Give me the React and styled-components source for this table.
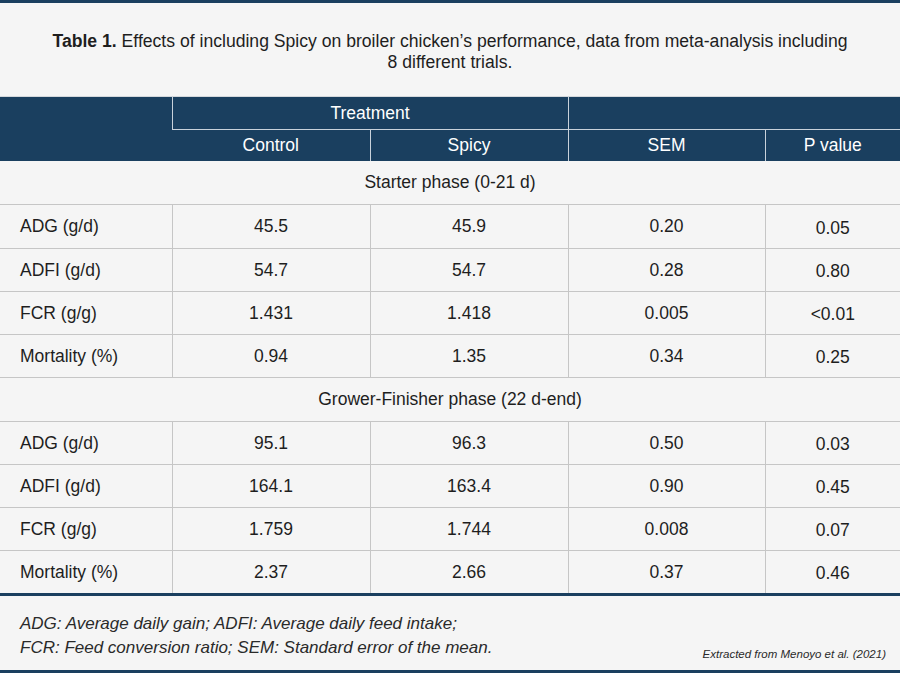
import React from 'react';
import styled, { createGlobalStyle } from 'styled-components';

const navy = '#1a3f5f';

const GlobalStyle = createGlobalStyle`
  html, body {
    margin: 0;
    padding: 0;
    background: #f5f5f5;
  }
  body {
    font-family: "Liberation Sans", Arial, sans-serif;
    color: #222;
  }
`;

const Page = styled.div`
  width: 900px;
  height: 673px;
  box-sizing: border-box;
  border-top: 3px solid ${navy};
  border-bottom: 3px solid ${navy};
  background: #f5f5f5;
  display: flex;
  flex-direction: column;
  overflow: hidden;
`;

const Caption = styled.div`
  flex-shrink: 0;
  height: 93px;
  display: flex;
  align-items: center;
  justify-content: center;
  text-align: center;
  padding: 4px 46px 0;
  font-size: 17.6px;
  line-height: 21px;
  color: #1e1e1e;
  box-sizing: border-box;

  b {
    font-weight: 700;
  }
`;

const Table = styled.table`
  flex-shrink: 0;
  width: 900px;
  border-collapse: collapse;
  table-layout: fixed;
  border-top: 1px solid #d4d8dc;
`;

const HeadCell = styled.th`
  background: ${navy};
  color: #fff;
  font-weight: 400;
  font-size: 17.5px;
  height: ${p => p.$h || 31}px;
  padding: 0;
  text-align: center;
  border-left: 1px solid #c9d2db;
  border-bottom: ${p => (p.$line ? '1px solid #c9d2db' : 'none')};

  &:first-child {
    border-left: none;
  }
`;

const PhaseCell = styled.td`
  height: 43px;
  padding: 0;
  text-align: center;
  font-size: 17.5px;
  color: #1e1e1e;
  border-bottom: 1px solid #c6c6c6;
`;

// row height = height + padding-top; the P value column sits 3px lower
const Cell = styled.td`
  height: ${p => (p.$tall ? 43 : 42) - (p.$low ? 3 : 0)}px;
  padding: ${p => (p.$low ? 3 : 0)}px 0 0 ${p => (p.$label ? 20 : 0)}px;
  font-size: 17.5px;
  color: #1e1e1e;
  text-align: ${p => (p.$label ? 'left' : 'center')};
  border-bottom: ${p => (p.$end ? `3px solid ${navy}` : '1px solid #c6c6c6')};
  border-left: 1px solid #c6c6c6;

  &:first-child {
    border-left: none;
  }
`;

const Footer = styled.div`
  flex: 1;
  display: flex;
  justify-content: space-between;
  align-items: flex-end;
  padding: 0 14px 10px 20px;
`;

const Notes = styled.div`
  font-style: italic;
  font-size: 17px;
  line-height: 24px;
  color: #2a2a2a;
`;

const Source = styled.div`
  font-style: italic;
  font-size: 11.5px;
  color: #2a2a2a;
`;

const starter = [
  ['ADG (g/d)', '45.5', '45.9', '0.20', '0.05'],
  ['ADFI (g/d)', '54.7', '54.7', '0.28', '0.80'],
  ['FCR (g/g)', '1.431', '1.418', '0.005', '<0.01'],
  ['Mortality (%)', '0.94', '1.35', '0.34', '0.25'],
];

const grower = [
  ['ADG (g/d)', '95.1', '96.3', '0.50', '0.03'],
  ['ADFI (g/d)', '164.1', '163.4', '0.90', '0.45'],
  ['FCR (g/g)', '1.759', '1.744', '0.008', '0.07'],
  ['Mortality (%)', '2.37', '2.66', '0.37', '0.46'],
];

const DataRows = ({ rows, last }) =>
  rows.map((r, i) => {
    const end = last && i === rows.length - 1;
    const tall = !last && i === 0;
    return (
      <tr key={r[0]}>
        <Cell $label $end={end} $tall={tall}>{r[0]}</Cell>
        <Cell $end={end} $tall={tall}>{r[1]}</Cell>
        <Cell $end={end} $tall={tall}>{r[2]}</Cell>
        <Cell $end={end} $tall={tall}>{r[3]}</Cell>
        <Cell $low $end={end} $tall={tall}>{r[4]}</Cell>
      </tr>
    );
  });

const App = () => (
  <>
    <GlobalStyle />
    <Page>
      <Caption>
        <div>
          <b>Table 1.</b> Effects of including Spicy on broiler chicken’s performance, data from meta-analysis including 8 different trials.
        </div>
      </Caption>
      <Table>
        <colgroup>
          <col style={{ width: 172 }} />
          <col style={{ width: 198 }} />
          <col style={{ width: 198 }} />
          <col style={{ width: 197 }} />
          <col style={{ width: 135 }} />
        </colgroup>
        <thead>
          <tr>
            <HeadCell rowSpan={2} />
            <HeadCell colSpan={2} $line $h={32}>Treatment</HeadCell>
            <HeadCell colSpan={2} $line $h={32} />
          </tr>
          <tr>
            <HeadCell>Control</HeadCell>
            <HeadCell>Spicy</HeadCell>
            <HeadCell>SEM</HeadCell>
            <HeadCell>P value</HeadCell>
          </tr>
        </thead>
        <tbody>
          <tr>
            <PhaseCell colSpan={5}>Starter phase (0-21 d)</PhaseCell>
          </tr>
          <DataRows rows={starter} />
          <tr>
            <PhaseCell colSpan={5}>Grower-Finisher phase (22 d-end)</PhaseCell>
          </tr>
          <DataRows rows={grower} last />
        </tbody>
      </Table>
      <Footer>
        <Notes>
          ADG: Average daily gain; ADFI: Average daily feed intake;
          <br />
          FCR: Feed conversion ratio; SEM: Standard error of the mean.
        </Notes>
        <Source>Extracted from Menoyo et al. (2021)</Source>
      </Footer>
    </Page>
  </>
);

export default App;
